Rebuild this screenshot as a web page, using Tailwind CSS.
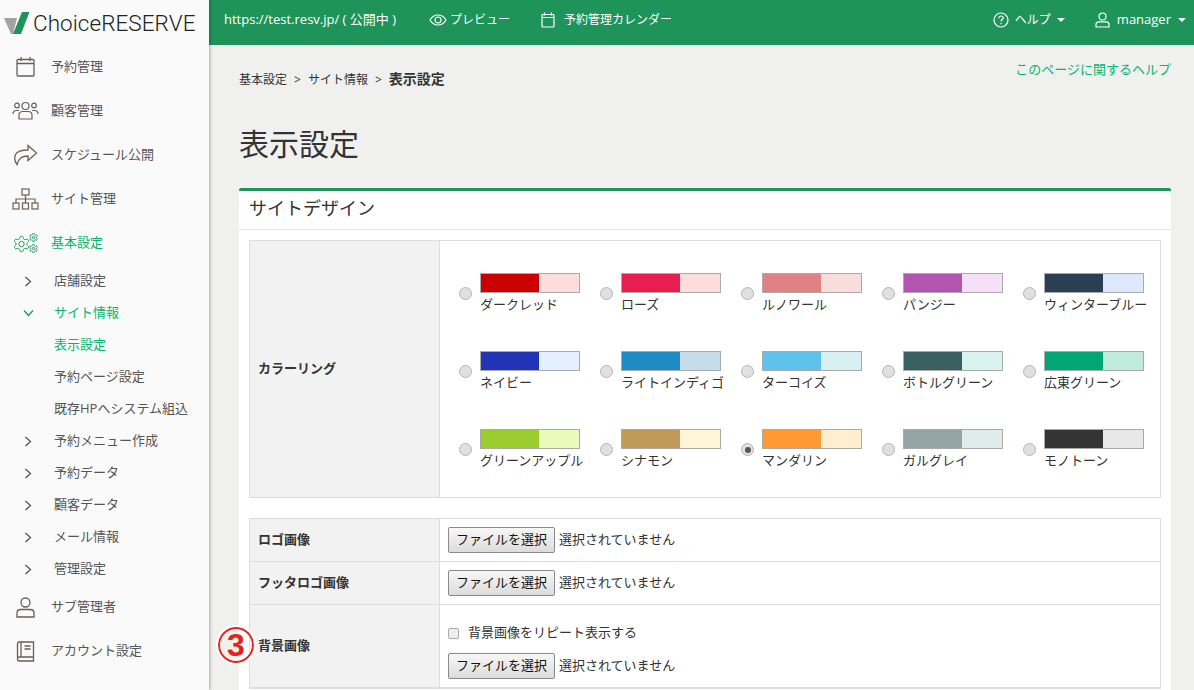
<!DOCTYPE html>
<html lang="ja">
  <head>
    <meta charset="UTF-8" />
    <title>表示設定</title>
    <script src="https://cdn.jsdelivr.net/npm/@tailwindcss/browser@4"></script>
  </head>
  <body class="h-screen overflow-hidden bg-[#f0f1ef] font-['Open_Sans','Noto_Sans_CJK_JP',sans-serif] text-[13px] text-[#333]">
    <div class="flex h-full">
      <!-- sidebar -->
      <aside class="z-10 h-full w-[209px] shrink-0 bg-[#fafafa] text-[#555] shadow-[1px_0_3px_rgba(0,0,0,0.3)]">
        <div class="flex h-[45px] items-center pl-[4px] pt-[1px]">
          <svg width="26" height="24" viewBox="0 0 26 24" class="shrink-0">
            <path d="M0 7H13L9 23H7Z" fill="#a3a3a3" />
            <path d="M18 1H25.500L17 23H9Z" fill="#1e935a" />
          </svg>
          <span class="ml-[3px] font-['Roboto'] text-[22.500px] font-light leading-none tracking-[0.05px] text-[#222]">ChoiceRESERVE</span>
        </div>
        <nav>
          <a class="flex h-[44px] items-center">
            <svg class="ml-[16px] w-[20px] shrink-0" height="22" viewBox="0 0 20 22" fill="none" stroke="#6b5f55" stroke-width="1.3"><rect x="1" y="3.5" width="17" height="16.5" rx="1" /><path d="M1 7.5H18M5 1V5M14 1V5" /></svg>
            <span class="ml-[15px]">予約管理</span>
          </a>
          <a class="flex h-[44px] items-center">
            <svg class="ml-[12px] w-[27px] shrink-0" height="20" viewBox="0 0 27 20" fill="none" stroke="#6b5f55" stroke-width="1.2"><circle cx="13.5" cy="5" r="3.5" /><circle cx="5" cy="4.5" r="2.3" /><circle cx="22" cy="4.5" r="2.3" /><path d="M7 18V14C7 11.5 9 10.5 11 10.5H16C18 10.5 20 11.5 20 14V18H7Z" /><path d="M1 13C1 10.5 2.5 9.5 4.5 9.5H7M26 13C26 10.5 24.500 9.500 22.500 9.500H20" /></svg>
            <span class="ml-[12px]">顧客管理</span>
          </a>
          <a class="flex h-[44px] items-center">
            <svg class="ml-[13px] w-[25px] shrink-0" height="22" viewBox="0 0 25 22" fill="none" stroke="#6b5f55" stroke-width="1.3"><path d="M15 1.500L23.500 9 15 16.500V12C9 12 6 14 4 20.500 1.500 17 1 14 2.500 10.500 4.500 7 9 6 15 6V1.500Z" /></svg>
            <span class="ml-[13px]">スケジュール公開</span>
          </a>
          <a class="flex h-[44px] items-center">
            <svg class="ml-[12px] w-[27px] shrink-0" height="22" viewBox="0 0 27 22" fill="none" stroke="#6b5f55" stroke-width="1.2"><rect x="10" y="1" width="7" height="6" /><rect x="1" y="15" width="6" height="6" /><rect x="10.500" y="15" width="6" height="6" /><rect x="20" y="15" width="6" height="6" /><path d="M13.500 7V15M4 15V11H23V15" /></svg>
            <span class="ml-[12px]">サイト管理</span>
          </a>
          <a class="flex h-[44px] items-center text-[#06b56c]">
            <svg class="ml-[13px] w-[25px] shrink-0" height="20" viewBox="0 0 25 20" fill="none" stroke="#1e9a5e" stroke-width="1">
              <defs><path id="gear" vector-effect="non-scaling-stroke" d="M12.220 2h-.44a2 2 0 0 0-2 2v.18a2 2 0 0 1-1 1.730l-.43.25a2 2 0 0 1-2 0l-.15-.08a2 2 0 0 0-2.730.73l-.22.38a2 2 0 0 0 .73 2.730l.15.1a2 2 0 0 1 1 1.720v.51a2 2 0 0 1-1 1.740l-.15.09a2 2 0 0 0-.73 2.730l.22.38a2 2 0 0 0 2.730.73l.15-.08a2 2 0 0 1 2 0l.43.25a2 2 0 0 1 1 1.730V20a2 2 0 0 0 2 2h.44a2 2 0 0 0 2-2v-.18a2 2 0 0 1 1-1.730l.43-.25a2 2 0 0 1 2 0l.15.08a2 2 0 0 0 2.730-.73l.22-.39a2 2 0 0 0-.73-2.730l-.15-.08a2 2 0 0 1-1-1.740v-.5a2 2 0 0 1 1-1.740l.15-.09a2 2 0 0 0 .73-2.730l-.22-.38a2 2 0 0 0-2.730-.73l-.15.08a2 2 0 0 1-2 0l-.43-.25a2 2 0 0 1-1-1.730V4a2 2 0 0 0-2-2z" /></defs>
              <use href="#gear" transform="translate(-.86 1.640) scale(.78)" />
              <circle cx="8.500" cy="11" r="2.700" />
              <use href="#gear" transform="translate(15.460 -.54) scale(.42)" />
              <circle cx="20.500" cy="4.500" r="1.200" />
              <use href="#gear" transform="translate(15.460 10.460) scale(.42)" />
              <circle cx="20.500" cy="15.500" r="1.200" />
            </svg>
            <span class="ml-[13px]">基本設定</span>
          </a>
          <div>
            <a class="flex h-[32px] items-center"><svg class="ml-[24px] w-[8px] shrink-0" height="11" viewBox="0 0 8 11" fill="none" stroke="#555" stroke-width="1.300"><path d="M1.500 1L6.500 5.500 1.500 10" /></svg><span class="ml-[22px]">店舗設定</span></a>
            <a class="flex h-[32px] items-center text-[#06b56c]"><svg class="ml-[23px] w-[11px] shrink-0" height="8" viewBox="0 0 11 8" fill="none" stroke="#1e9a5e" stroke-width="1.300"><path d="M1 1.500L5.500 6.500 10 1.500" /></svg><span class="ml-[20px]">サイト情報</span></a>
            <a class="flex h-[32px] items-center pl-[54px] text-[#06b56c]">表示設定</a>
            <a class="flex h-[32px] items-center pl-[54px]">予約ページ設定</a>
            <a class="flex h-[32px] items-center pl-[54px]">既存HPへシステム組込</a>
            <a class="flex h-[32px] items-center"><svg class="ml-[24px] w-[8px] shrink-0" height="11" viewBox="0 0 8 11" fill="none" stroke="#555" stroke-width="1.300"><path d="M1.500 1L6.500 5.500 1.500 10" /></svg><span class="ml-[22px]">予約メニュー作成</span></a>
            <a class="flex h-[32px] items-center"><svg class="ml-[24px] w-[8px] shrink-0" height="11" viewBox="0 0 8 11" fill="none" stroke="#555" stroke-width="1.300"><path d="M1.500 1L6.500 5.500 1.500 10" /></svg><span class="ml-[22px]">予約データ</span></a>
            <a class="flex h-[32px] items-center"><svg class="ml-[24px] w-[8px] shrink-0" height="11" viewBox="0 0 8 11" fill="none" stroke="#555" stroke-width="1.300"><path d="M1.500 1L6.500 5.500 1.500 10" /></svg><span class="ml-[22px]">顧客データ</span></a>
            <a class="flex h-[32px] items-center"><svg class="ml-[24px] w-[8px] shrink-0" height="11" viewBox="0 0 8 11" fill="none" stroke="#555" stroke-width="1.300"><path d="M1.500 1L6.500 5.500 1.500 10" /></svg><span class="ml-[22px]">メール情報</span></a>
            <a class="flex h-[32px] items-center"><svg class="ml-[24px] w-[8px] shrink-0" height="11" viewBox="0 0 8 11" fill="none" stroke="#555" stroke-width="1.300"><path d="M1.500 1L6.500 5.500 1.500 10" /></svg><span class="ml-[22px]">管理設定</span></a>
          </div>
          <a class="flex h-[44px] items-center">
            <svg class="ml-[16px] w-[19px] shrink-0" height="21" viewBox="0 0 19 21" fill="none" stroke="#6b5f55" stroke-width="1.300"><circle cx="9.500" cy="5.500" r="4.500" /><path d="M1 20V16C1 13.500 3 12.500 5 12.500H14C16 12.500 18 13.500 18 16V20H1Z" /></svg>
            <span class="ml-[16px]">サブ管理者</span>
          </a>
          <a class="flex h-[44px] items-center">
            <svg class="ml-[16px] w-[19px] shrink-0" height="21" viewBox="0 0 19 21" fill="none" stroke="#6b5f55" stroke-width="1.300"><path d="M1.500 17V3C1.500 2 2 1 3 1H17.500V16H3.500C2 16 1.500 17 1.500 18S2 20 3.500 20H17.500V16" /><path d="M5 1V16M8.500 5H14.500M8.500 8H14.500" /></svg>
            <span class="ml-[16px]">アカウント設定</span>
          </a>
        </nav>
      </aside>

      <div class="flex min-w-0 flex-1 flex-col">
        <!-- top bar -->
        <header class="flex h-[45px] shrink-0 items-center bg-[#1e935a] pb-[5px] pl-[15px] pr-[8px] text-[12px] text-white">
          <span class="text-[13px]">https://test.resv.jp/ ( 公開中 )</span>
          <span class="ml-[33px] flex items-center gap-[3px]">
            <svg width="18" height="12" viewBox="0 0 18 12" fill="none" stroke="#fff" stroke-width="1.200"><path d="M1 6C3 2.500 6 1 9 1S15 2.500 17 6C15 9.500 12 11 9 11S3 9.500 1 6Z" /><circle cx="9" cy="6" r="3" /></svg>
            プレビュー
          </span>
          <span class="ml-[31px] flex items-center gap-[9px]">
            <svg width="14" height="16" viewBox="0 0 14 16" fill="none" stroke="#fff" stroke-width="1.200"><rect x="1" y="2.500" width="12" height="12.500" rx="1" /><path d="M1 5.500H13M3.500 .5V3.500M10.500 .5V3.500" /></svg>
            予約管理カレンダー
          </span>
          <span class="ml-auto flex items-center gap-[6px]">
            <svg width="16" height="16" viewBox="0 0 16 16" fill="none" stroke="#fff" stroke-width="1.200"><circle cx="8" cy="8" r="7" /><path d="M5.800 6.200C5.800 4.800 6.800 4 8 4S10.200 4.800 10.200 6C10.200 7.500 8 7.700 8 9.500" /><path d="M8 11V12.300" /></svg>
            ヘルプ
            <span class="h-0 w-0 border-x-[4px] border-t-[4px] border-x-transparent border-t-white"></span>
          </span>
          <span class="ml-[30px] flex items-center gap-[7px]">
            <svg width="15" height="16" viewBox="0 0 15 16" fill="none" stroke="#fff" stroke-width="1.200"><circle cx="7.500" cy="4.500" r="3.500" /><path d="M1 15V12.500C1 10.800 2.500 9.800 4 9.800H11C12.500 9.800 14 10.800 14 12.500V15H1Z" /></svg>
            <span class="text-[13px]">manager</span>
            <span class="h-0 w-0 border-x-[4px] border-t-[4px] border-x-transparent border-t-white"></span>
          </span>
        </header>

        <main class="relative min-h-0 flex-1 pl-[30px] pr-[23px]">
          <div class="flex h-[56px]">
            <div class="flex pt-[25px] text-[12px] leading-[20px]">
              <span>基本設定</span><span class="mx-[7px]">&gt;</span><span>サイト情報</span><span class="mx-[7px]">&gt;</span><span class="-mt-[1px] text-[14px] font-bold">表示設定</span>
            </div>
            <a class="ml-auto pt-[15px] leading-[18px] text-[#06b56c]">このページに関するヘルプ</a>
          </div>
          <h1 class="mt-[21px] h-[66px] text-[30px] font-normal leading-[44px] text-[#333]">表示設定</h1>

          <!-- panel -->
          <section class="rounded-t-[2px] border-t-[3px] border-[#1e935a] bg-white">
            <h2 class="h-[39px] border-b border-[#e6e6e6] px-[10px] text-[18px] font-normal leading-[35px] text-[#333]">サイトデザイン</h2>
            <div class="p-[10px]">
              <div class="flex h-[258px] border border-[#ddd]">
                <div class="flex w-[190px] shrink-0 items-center border-r border-[#ddd] bg-[#f2f2f2] px-[8px] font-bold">カラーリング</div>
                <div class="grid flex-1 grid-cols-[repeat(5,141px)] grid-rows-[repeat(3,78px)] pl-[19px] pt-[32px] leading-[20px]">
                  <label class="flex"><span class="mt-[14px] h-[13px] w-[13px] shrink-0 rounded-full border border-[#b5b5b5] bg-[#e0e0e0]"></span><span class="ml-[8px]"><span class="flex h-[20px] w-[100px] border border-[#aaa]"><span class="w-[58px] bg-[#cc0000]"></span><span class="flex-1 bg-[#ffdddd]"></span></span><span class="block whitespace-nowrap pt-[1px]">ダークレッド</span></span></label>
                  <label class="flex"><span class="mt-[14px] h-[13px] w-[13px] shrink-0 rounded-full border border-[#b5b5b5] bg-[#e0e0e0]"></span><span class="ml-[8px]"><span class="flex h-[20px] w-[100px] border border-[#aaa]"><span class="w-[58px] bg-[#e91e50]"></span><span class="flex-1 bg-[#ffdddd]"></span></span><span class="block whitespace-nowrap pt-[1px]">ローズ</span></span></label>
                  <label class="flex"><span class="mt-[14px] h-[13px] w-[13px] shrink-0 rounded-full border border-[#b5b5b5] bg-[#e0e0e0]"></span><span class="ml-[8px]"><span class="flex h-[20px] w-[100px] border border-[#aaa]"><span class="w-[58px] bg-[#e08283]"></span><span class="flex-1 bg-[#f9dcdc]"></span></span><span class="block whitespace-nowrap pt-[1px]">ルノワール</span></span></label>
                  <label class="flex"><span class="mt-[14px] h-[13px] w-[13px] shrink-0 rounded-full border border-[#b5b5b5] bg-[#e0e0e0]"></span><span class="ml-[8px]"><span class="flex h-[20px] w-[100px] border border-[#aaa]"><span class="w-[58px] bg-[#b155b0]"></span><span class="flex-1 bg-[#f6e0f8]"></span></span><span class="block whitespace-nowrap pt-[1px]">パンジー</span></span></label>
                  <label class="flex"><span class="mt-[14px] h-[13px] w-[13px] shrink-0 rounded-full border border-[#b5b5b5] bg-[#e0e0e0]"></span><span class="ml-[8px]"><span class="flex h-[20px] w-[100px] border border-[#aaa]"><span class="w-[58px] bg-[#2a3f54]"></span><span class="flex-1 bg-[#dde8fa]"></span></span><span class="block whitespace-nowrap pt-[1px]">ウィンターブルー</span></span></label>

                  <label class="flex"><span class="mt-[14px] h-[13px] w-[13px] shrink-0 rounded-full border border-[#b5b5b5] bg-[#e0e0e0]"></span><span class="ml-[8px]"><span class="flex h-[20px] w-[100px] border border-[#aaa]"><span class="w-[58px] bg-[#2233b5]"></span><span class="flex-1 bg-[#e3f0ff]"></span></span><span class="block whitespace-nowrap pt-[1px]">ネイビー</span></span></label>
                  <label class="flex"><span class="mt-[14px] h-[13px] w-[13px] shrink-0 rounded-full border border-[#b5b5b5] bg-[#e0e0e0]"></span><span class="ml-[8px]"><span class="flex h-[20px] w-[100px] border border-[#aaa]"><span class="w-[58px] bg-[#1e8bc3]"></span><span class="flex-1 bg-[#c5dcea]"></span></span><span class="block whitespace-nowrap pt-[1px]">ライトインディゴ</span></span></label>
                  <label class="flex"><span class="mt-[14px] h-[13px] w-[13px] shrink-0 rounded-full border border-[#b5b5b5] bg-[#e0e0e0]"></span><span class="ml-[8px]"><span class="flex h-[20px] w-[100px] border border-[#aaa]"><span class="w-[58px] bg-[#5fc2ed]"></span><span class="flex-1 bg-[#d9f0f3]"></span></span><span class="block whitespace-nowrap pt-[1px]">ターコイズ</span></span></label>
                  <label class="flex"><span class="mt-[14px] h-[13px] w-[13px] shrink-0 rounded-full border border-[#b5b5b5] bg-[#e0e0e0]"></span><span class="ml-[8px]"><span class="flex h-[20px] w-[100px] border border-[#aaa]"><span class="w-[58px] bg-[#3a5f5f]"></span><span class="flex-1 bg-[#d8f3f0]"></span></span><span class="block whitespace-nowrap pt-[1px]">ボトルグリーン</span></span></label>
                  <label class="flex"><span class="mt-[14px] h-[13px] w-[13px] shrink-0 rounded-full border border-[#b5b5b5] bg-[#e0e0e0]"></span><span class="ml-[8px]"><span class="flex h-[20px] w-[100px] border border-[#aaa]"><span class="w-[58px] bg-[#02a676]"></span><span class="flex-1 bg-[#c0ebdd]"></span></span><span class="block whitespace-nowrap pt-[1px]">広東グリーン</span></span></label>

                  <label class="flex"><span class="mt-[14px] h-[13px] w-[13px] shrink-0 rounded-full border border-[#b5b5b5] bg-[#e0e0e0]"></span><span class="ml-[8px]"><span class="flex h-[20px] w-[100px] border border-[#aaa]"><span class="w-[58px] bg-[#9bcd30]"></span><span class="flex-1 bg-[#e8fbba]"></span></span><span class="block whitespace-nowrap pt-[1px]">グリーンアップル</span></span></label>
                  <label class="flex"><span class="mt-[14px] h-[13px] w-[13px] shrink-0 rounded-full border border-[#b5b5b5] bg-[#e0e0e0]"></span><span class="ml-[8px]"><span class="flex h-[20px] w-[100px] border border-[#aaa]"><span class="w-[58px] bg-[#c09a58]"></span><span class="flex-1 bg-[#fff6d8]"></span></span><span class="block whitespace-nowrap pt-[1px]">シナモン</span></span></label>
                  <label class="flex"><span class="mt-[14px] flex h-[13px] w-[13px] shrink-0 items-center justify-center rounded-full border border-[#b5b5b5] bg-[#e0e0e0]"><span class="h-[6px] w-[6px] rounded-full bg-[#555]"></span></span><span class="ml-[8px]"><span class="flex h-[20px] w-[100px] border border-[#aaa]"><span class="w-[58px] bg-[#ff9933]"></span><span class="flex-1 bg-[#ffefd0]"></span></span><span class="block whitespace-nowrap pt-[1px]">マンダリン</span></span></label>
                  <label class="flex"><span class="mt-[14px] h-[13px] w-[13px] shrink-0 rounded-full border border-[#b5b5b5] bg-[#e0e0e0]"></span><span class="ml-[8px]"><span class="flex h-[20px] w-[100px] border border-[#aaa]"><span class="w-[58px] bg-[#95a5a6]"></span><span class="flex-1 bg-[#e0ecec]"></span></span><span class="block whitespace-nowrap pt-[1px]">ガルグレイ</span></span></label>
                  <label class="flex"><span class="mt-[14px] h-[13px] w-[13px] shrink-0 rounded-full border border-[#b5b5b5] bg-[#e0e0e0]"></span><span class="ml-[8px]"><span class="flex h-[20px] w-[100px] border border-[#aaa]"><span class="w-[58px] bg-[#333333]"></span><span class="flex-1 bg-[#e8e8e8]"></span></span><span class="block whitespace-nowrap pt-[1px]">モノトーン</span></span></label>
                </div>
              </div>

              <div class="mt-[20px] border border-[#ddd]">
                <div class="flex h-[43px] border-b border-[#ddd]">
                  <div class="flex w-[190px] shrink-0 items-center border-r border-[#ddd] bg-[#f2f2f2] px-[8px] font-bold">ロゴ画像</div>
                  <div class="flex items-center pl-[8px]"><span class="flex h-[26px] w-[107px] items-center justify-center rounded-[2px] border border-[#8a8a8a] bg-gradient-to-b from-[#f7f7f7] to-[#dcdcdc] text-[#111]">ファイルを選択</span><span class="ml-[4px]">選択されていません</span></div>
                </div>
                <div class="flex h-[43px] border-b border-[#ddd]">
                  <div class="flex w-[190px] shrink-0 items-center border-r border-[#ddd] bg-[#f2f2f2] px-[8px] font-bold">フッタロゴ画像</div>
                  <div class="flex items-center pl-[8px]"><span class="flex h-[26px] w-[107px] items-center justify-center rounded-[2px] border border-[#8a8a8a] bg-gradient-to-b from-[#f7f7f7] to-[#dcdcdc] text-[#111]">ファイルを選択</span><span class="ml-[4px]">選択されていません</span></div>
                </div>
                <div class="flex h-[83px] border-b border-[#ddd]">
                  <div class="flex w-[190px] shrink-0 items-center border-r border-[#ddd] bg-[#f2f2f2] px-[8px] font-bold">背景画像</div>
                  <div class="pl-[8px] pt-[18px]">
                    <div class="flex h-[20px] items-center"><span class="h-[11px] w-[11px] rounded-[2px] border border-[#aaa] bg-[#eee]"></span><span class="ml-[9px]">背景画像をリピート表示する</span></div>
                    <div class="mt-[10px] flex items-center"><span class="flex h-[26px] w-[107px] items-center justify-center rounded-[2px] border border-[#8a8a8a] bg-gradient-to-b from-[#f7f7f7] to-[#dcdcdc] text-[#111]">ファイルを選択</span><span class="ml-[4px]">選択されていません</span></div>
                  </div>
                </div>
              </div>
            </div>
          </section>

          <!-- annotation marker -->
          <div class="absolute left-[9px] top-[582px] flex h-[36px] w-[36px] items-center justify-center rounded-full border-[2px] border-[#e8201a] font-['Liberation_Sans'] text-[32px] font-bold leading-none text-[#e8201a] outline-[2px] outline-white">3</div>
        </main>
      </div>
    </div>
  </body>
</html>
